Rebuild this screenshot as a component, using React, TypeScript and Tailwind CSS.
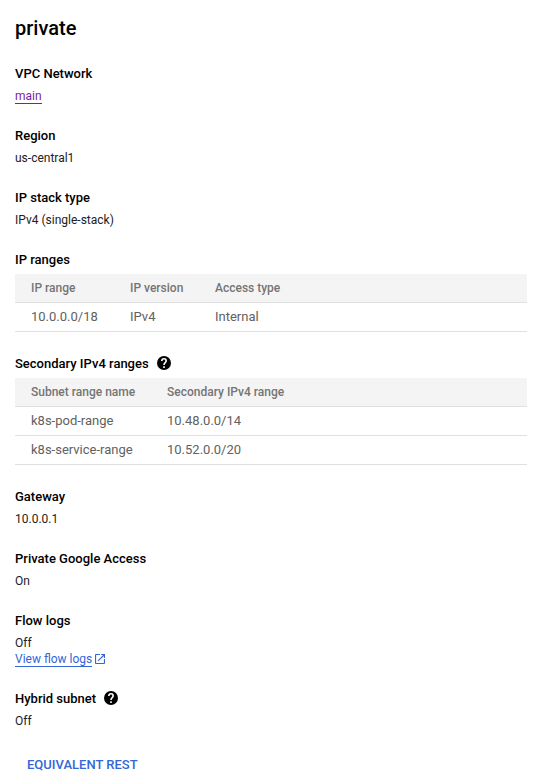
import type { ReactNode } from "react";

function HelpIcon() {
  return (
    <svg className="mb-0.5 ml-2 size-[14px]" viewBox="2 2 20 20" fill="#000" aria-hidden="true">
      <circle cx="12" cy="12" r="10" />
      <path
        d="M8.900 9.100c0-1.710 1.390-3.100 3.100-3.100s3.100 1.390 3.100 3.100c0 2.300-3.100 2.600-3.100 5.600M12 16.800v2.200"
        fill="none"
        stroke="#fff"
        strokeWidth="2.300"
      />
    </svg>
  );
}

function OpenInNewIcon() {
  return (
    <svg className="ml-[3px] size-[10px]" viewBox="3 3 18 18" fill="#3367d6" aria-hidden="true">
      <path d="M19 19H5V5h7V3H5c-1.110 0-2 .9-2 2v14c0 1.100.890 2 2 2h14c1.100 0 2-.9 2-2v-7h-2v7zM14 3v2h3.590l-9.830 9.830 1.410 1.410L19 6.410V10h2V3h-7z" />
    </svg>
  );
}

function Field({ label, help, children }: { label: string; help?: boolean; children: ReactNode }) {
  return (
    <section>
      <h2 className="mb-1 flex h-5 items-center text-[13px] leading-5 font-medium">
        {label}
        {help && <HelpIcon />}
      </h2>
      {children}
    </section>
  );
}

function Table({ columns, rows, widths }: { columns: string[]; rows: string[][]; widths: string[] }) {
  return (
    <table className="w-full table-fixed border-collapse text-left">
      <thead>
        <tr className="h-[29px] bg-[#f4f4f4] text-xs text-[#757575] shadow-[inset_0_-1px_0_#e0e0e0]">
          {columns.map((c, i) => (
            <th key={c} className={`${widths[i]} p-0 font-medium`}>
              <div className="h-[29px] leading-7">{c}</div>
            </th>
          ))}
        </tr>
      </thead>
      <tbody>
        {rows.map((row) => (
          <tr key={row[0]} className="h-[29px] text-[13px] text-[#616161] shadow-[inset_0_-1px_0_#e0e0e0]">
            {row.map((cell, i) => (
              <td key={i} className={`${widths[i]} p-0`}>
                <div className="h-[29px] leading-7">{cell}</div>
              </td>
            ))}
          </tr>
        ))}
      </tbody>
    </table>
  );
}

export default function App() {
  return (
    <main className="h-[777px] overflow-hidden bg-white pr-3 pl-[15px] font-[Roboto,sans-serif] text-xs leading-4 text-black">
      <h1 className="h-16 pt-4 text-xl leading-6 font-medium">private</h1>
      <div className="flex flex-col gap-[22px]">
        <Field label="VPC Network">
          <p className="h-4">
            <a className="inline-block h-4 border-b border-[#7b1fa2] leading-4 text-[#7b1fa2]">main</a>
          </p>
        </Field>
        <Field label="Region">
          <p className="text-[#212121]">us-central1</p>
        </Field>
        <Field label="IP stack type">
          <p className="text-[#212121]">IPv4 (single-stack)</p>
        </Field>
        <Field label="IP ranges">
          <Table
            columns={["IP range", "IP version", "Access type"]}
            rows={[["10.0.0.0/18", "IPv4", "Internal"]]}
            widths={["w-[115px] pl-4", "w-[85px]", "w-auto"]}
          />
        </Field>
        <Field label="Secondary IPv4 ranges" help>
          <Table
            columns={["Subnet range name", "Secondary IPv4 range"]}
            rows={[
              ["k8s-pod-range", "10.48.0.0/14"],
              ["k8s-service-range", "10.52.0.0/20"],
            ]}
            widths={["w-[152px] pl-4", "w-auto"]}
          />
        </Field>
        <Field label="Gateway">
          <p className="text-[#212121]">10.0.0.1</p>
        </Field>
        <Field label="Private Google Access">
          <p className="text-[#212121]">On</p>
        </Field>
        <Field label="Flow logs">
          <p className="text-[#212121]">Off</p>
          <div className="flex h-4 items-center text-[#3367d6]">
            <a className="h-4 border-b border-[#3367d6] leading-4">View flow logs</a>
            <OpenInNewIcon />
          </div>
        </Field>
        <Field label="Hybrid subnet" help>
          <p className="text-[#212121]">Off</p>
        </Field>
      </div>
      <button className="mt-[26px] block pl-3 text-[13px] leading-5 font-medium text-[#3367d6]">EQUIVALENT REST</button>
    </main>
  );
}
